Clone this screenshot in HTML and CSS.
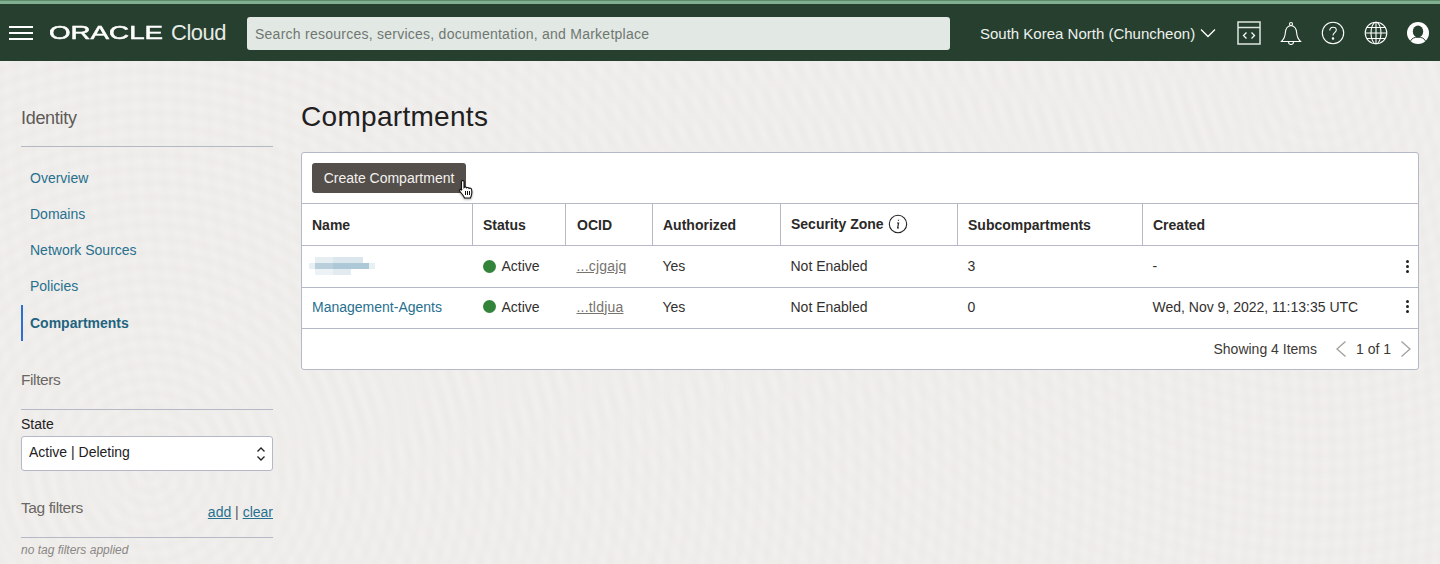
FILE: index.html
```html
<!DOCTYPE html>
<html lang="en">
<head>
	<meta charset="UTF-8">
	<meta name="viewport" content="width=device-width, initial-scale=1.0">
	<link rel="stylesheet" href="styles.css">
	<title>Compartments</title>
</head>
<body>
	<header class="topbar">
		<button class="burger" aria-label="Menu"><i></i><i></i><i></i></button>
		<div class="brand"><span class="brand-mark">ORACLE</span><span class="brand-cloud">Cloud</span></div>
		<div class="search">Search resources, services, documentation, and Marketplace</div>
		<div class="region">South Korea North (Chuncheon)
			<svg width="16" height="10" viewBox="0 0 16 10"><path d="M1 1.500l7 7 7-7" fill="none" stroke="#fff" stroke-width="1.300"/></svg>
		</div>
		<div class="tools">
			<svg width="24" height="24" viewBox="0 0 24 24" fill="none" stroke="#dfe6e0" stroke-width="1.500"><rect x="1" y="1" width="22" height="22"/><path d="M1 6.500h22"/><path d="M9.500 11.500L6.500 14.500l3 3M14.500 11.500l3 3-3 3" stroke="#fff" stroke-width="1.300"/></svg>
			<svg width="22" height="24" viewBox="0 0 22 24" fill="none" stroke="#fff" stroke-width="1.100"><path d="M1.500 20.500c2.500-2.500 3.600-4.500 3.800-8.500.2-4 2-7 5.700-7.500 3.700.5 5.500 3.500 5.700 7.500.2 4 1.300 6 3.800 8.500z"/><circle cx="11" cy="3" r="1.500"/><path d="M8.500 21a2.500 2.500 0 0 0 5 0"/></svg>
			<svg width="24" height="24" viewBox="0 0 24 24" fill="none" stroke="#fff" stroke-width="1.100"><circle cx="12" cy="12" r="10.700"/><path d="M8.800 9.500c0-2 1.400-3.300 3.300-3.300s3.200 1.200 3.200 2.800c0 2.600-3.300 2.700-3.300 5.500"/><circle cx="12" cy="17.500" r=".7" fill="#fff"/></svg>
			<svg width="24" height="24" viewBox="0 0 24 24" fill="none" stroke="#fff" stroke-width="1.100"><circle cx="12" cy="12" r="10.800"/><ellipse cx="12" cy="12" rx="5" ry="10.800"/><path d="M12 1.200v21.600M1.200 12h21.600M2.800 6.500h18.400M2.800 17.500h18.400"/></svg>
			<svg class="avatar" width="22" height="22" viewBox="0 0 22 22"><circle cx="11" cy="11" r="11" fill="#fff"/><ellipse cx="11" cy="9.500" rx="5.200" ry="6" fill="#263f2e"/><path d="M3.500 19c1.500-3 4-3.800 7.500-3.800s6 .8 7.500 3.800" fill="none" stroke="#263f2e" stroke-width="1"/></svg>
		</div>
	</header>
	<div class="page">
		<aside class="sidebar">
			<h2 class="side-title">Identity</h2>
			<nav class="side-nav">
				<a href="#">Overview</a>
				<a href="#">Domains</a>
				<a href="#">Network Sources</a>
				<a href="#">Policies</a>
				<a href="#" class="current">Compartments</a>
			</nav>
			<h3 class="filter-title">Filters</h3>
			<label class="state-label">State</label>
			<div class="select">Active | Deleting
				<svg width="10" height="16" viewBox="0 0 10 16" fill="none" stroke="#222" stroke-width="1.300"><path d="M1.500 5.500L5 2l3.500 3.500M1.500 10.500L5 14l3.500-3.500"/></svg>
			</div>
			<div class="tag-head">
				<h3>Tag filters</h3>
				<span class="tag-links"><a href="#">add</a> | <a href="#">clear</a></span>
			</div>
			<p class="no-tags">no tag filters applied</p>
		</aside>
		<main class="content">
			<h1>Compartments</h1>
			<section class="panel">
				<div class="toolbar">
					<button class="btn">Create Compartment</button>
					<svg class="pointer" width="15" height="19" viewBox="0 0 15 19"><path d="M2.500 1.500c0-1.300 2.500-1.300 2.500 0v6c.8-.8 2.200-.7 2.500.3.800-.6 2.200-.4 2.500.6.900-.5 2.300-.1 2.500 1 .5 2 .5 4.500-.4 6.800l-.6 1.800H5.500L4.500 16 1 11.500C0 10 1.500 8.700 2.800 9.800l-.3.200z" fill="#fff" stroke="#111" stroke-width="1.100"/><path d="M6.500 11v4M8.500 11v4M10.500 11v4" stroke="#111" stroke-width="1"/></svg>
				</div>
				<table class="grid">
					<colgroup><col class="c-name"><col class="c-status"><col class="c-ocid"><col class="c-auth"><col class="c-zone"><col class="c-sub"><col></colgroup>
					<thead>
						<tr>
							<th>Name</th><th>Status</th><th class="cell-ocid">OCID</th><th>Authorized</th>
							<th><span class="zone">Security Zone
								<svg width="20" height="20" viewBox="0 0 20 20"><circle cx="10" cy="10" r="8.700" fill="none" stroke="#222" stroke-width="1.100"/><path d="M10.500 5.800v.9M9 9h1.600l-1 5h1.400" fill="none" stroke="#222" stroke-width="1.200"/></svg>
							</span></th>
							<th>Subcompartments</th><th>Created</th>
						</tr>
					</thead>
					<tbody>
						<tr>
							<td><svg class="smudge" width="66" height="18" viewBox="0 0 66 18"><rect x="6" width="18" height="6" fill="#e6eef2"/><rect x="24" width="30" height="6" fill="#dbe7ed"/><rect y="6" width="6" height="6" fill="#e8f0f3"/><rect x="6" y="6" width="18" height="6" fill="#b9d0dc"/><rect x="24" y="6" width="36" height="6" fill="#adc8d6"/><rect x="60" y="6" width="6" height="6" fill="#e8f0f3"/><rect x="6" y="12" width="18" height="6" fill="#ecf2f5"/><rect x="24" y="12" width="18" height="6" fill="#e1ebf0"/></svg></td>
							<td><span class="status"><i></i>Active</span></td>
							<td class="cell-ocid"><a href="#" class="ocid">...cjgajq</a></td>
							<td>Yes</td><td>Not Enabled</td><td>3</td>
							<td><div class="created"><span>-</span><span class="kebab"><i></i><i></i><i></i></span></div></td>
						</tr>
						<tr>
							<td><a href="#" class="link">Management-Agents</a></td>
							<td><span class="status"><i></i>Active</span></td>
							<td class="cell-ocid"><a href="#" class="ocid">...tldjua</a></td>
							<td>Yes</td><td>Not Enabled</td><td>0</td>
							<td><div class="created"><span>Wed, Nov 9, 2022, 11:13:35 UTC</span><span class="kebab"><i></i><i></i><i></i></span></div></td>
						</tr>
					</tbody>
				</table>
				<div class="pager">
					<span>Showing 4 Items</span>
					<svg class="prev" width="12" height="18" viewBox="0 0 12 18"><path d="M10.500 1.500L2 9l8.500 7.500" fill="none" stroke="#a3a09c" stroke-width="1.300"/></svg>
					<span>1 of 1</span>
					<svg class="next" width="12" height="18" viewBox="0 0 12 18"><path d="M1.500 1.500L10 9l-8.500 7.500" fill="none" stroke="#a3a09c" stroke-width="1.300"/></svg>
				</div>
			</section>
		</main>
	</div>
</body>
</html>
```
FILE: styles.css
```css
*{
	box-sizing:border-box;
}
html,body{
	height:100%;
}
body{
	margin:0;
	overflow:hidden;
	color:#22201e;
	font-family:"Liberation Sans", Arial, sans-serif;
	font-size:14px;
	background-color:#f2f0ee;
	background-image:
		repeating-radial-gradient(circle at 150px 470px, rgba(226,223,219,0) 0, rgba(226,223,219,.2) 7px, rgba(226,223,219,0) 14px),
		repeating-radial-gradient(circle at 1320px 80px, rgba(226,223,219,0) 0, rgba(226,223,219,.15) 8px, rgba(226,223,219,0) 16px);
}
a{
	color:#22667f;
}
h1,h2,h3,p{
	margin:0;
	font-weight:normal;
}

/* top bar */
.topbar{
	display:flex;
	align-items:center;
	height:61px;
	padding-top:5px;
	background:#263f2e;
	background-image:linear-gradient(#5d8a6b 0 1px, #80b08f 1px 4px, #263f2e 4px);
	color:#fff;
}
.burger{
	display:flex;
	flex-direction:column;
	gap:4px;
	width:24px;
	margin-left:9px;
	padding:0;
	border:0;
	background:none;
}
.burger i{
	display:block;
	height:2px;
	background:#fff;
}
.brand{
	display:flex;
	align-items:center;
	width:198px;
	margin-left:16px;
}
.brand-mark{
	display:inline-block;
	width:116px;
	font-size:19px;
	line-height:20px;
	transform:scaleX(1.460);
	transform-origin:left center;
	-webkit-text-stroke:.5px #fff;
}
.brand-cloud{
	margin-left:6px;
	font-size:22px;
	letter-spacing:-.5px;
	color:#e6ebe7;
}
.search{
	width:703px;
	height:33px;
	padding:1px 8px 0;
	border-radius:3px;
	background:#e2e8e3;
	color:#6f7772;
	line-height:33px;
	letter-spacing:.25px;
}
.region{
	display:flex;
	align-items:center;
	gap:5px;
	margin-left:30px;
	font-size:15px;
	color:#eef1ee;
	white-space:nowrap;
}
.tools{
	display:flex;
	align-items:center;
	gap:19px;
	margin-left:21px;
}

/* page */
.page{
	display:flex;
	padding-left:21px;
	padding-right:21px;
}
.sidebar{
	flex:none;
	width:252px;
	padding-top:47px;
}
.side-title{
	height:39px;
	border-bottom:1px solid #b4b8c0;
	font-size:18px;
	line-height:21px;
	color:#5d5a57;
	letter-spacing:-.3px;
}
.side-nav{
	display:flex;
	flex-direction:column;
	margin-top:13px;
}
.side-nav a{
	height:36px;
	padding-left:9px;
	line-height:36px;
	text-decoration:none;
	color:#27708f;
}
.side-nav .current{
	margin-top:1px;
	border-left:2px solid #2d6fce;
	padding-left:7px;
	font-weight:bold;
	color:#1f6480;
}
.filter-title{
	height:39px;
	margin-top:30px;
	margin-bottom:6px;
	border-bottom:1px solid #b4b8c7;
	font-size:15.500px;
	line-height:18px;
	letter-spacing:-.4px;
	color:#6a6764;
}
.state-label{
	display:block;
	margin-bottom:4px;
	line-height:16px;
}
.select{
	display:flex;
	align-items:center;
	justify-content:space-between;
	height:35px;
	padding:0 6px 3px 7px;
	border:1px solid #b4b8c7;
	border-radius:3px;
	background:#fff;
}
.select svg{
	margin-top:3px;
}
.tag-head{
	display:flex;
	align-items:flex-end;
	justify-content:space-between;
	height:47px;
	padding-bottom:17px;
	margin-top:20px;
	border-bottom:1px solid #b4b8c7;
}
.tag-head h3{
	margin-bottom:0;
	font-size:15.500px;
	line-height:22px;
	letter-spacing:-.4px;
	color:#6a6764;
	transform:translateY(-1px);
}
.tag-links{
	color:#555;
}
.tag-links a{
	color:#27708f;
}
.no-tags{
	margin-top:5px;
	font-size:12px;
	font-style:italic;
	color:#8a8784;
}

/* main */
.content{
	flex:1;
	min-width:0;
	margin-left:28px;
}
.content h1{
	height:91px;
	padding-top:39px;
	font-size:28px;
	line-height:34px;
	letter-spacing:.3px;
}
.panel{
	border:1px solid #b4b8c7;
	border-radius:3px;
	background:#fff;
}
.toolbar{
	position:relative;
	height:50px;
	padding:10px;
}
.btn{
	height:30px;
	width:154px;
	padding:0;
	border:0;
	border-radius:3px;
	background:#544f4a;
	color:#f4f2f0;
	font:14px "Liberation Sans", Arial, sans-serif;
}
.pointer{
	position:absolute;
	left:157px;
	top:27px;
	filter:drop-shadow(0 1px 1px rgba(0,0,0,.35));
}
.grid{
	width:100%;
	border-collapse:collapse;
	table-layout:fixed;
}
.c-name{width:170px}
.c-status{width:93px}
.c-ocid{width:87px}
.c-auth{width:128px}
.c-zone{width:177px}
.c-sub{width:185px}
.grid th{
	height:42px;
	padding:0 10px 0 10.500px;
	border-top:1px solid #b4b8c7;
	border-bottom:1px solid #b4b8c7;
	border-left:1px solid #b4b8c7;
	font-weight:bold;
	text-align:left;
	color:#2b2927;
}
.grid th:first-child{
	border-left:0;
	padding-left:10px;
}
.grid td{
	height:41.500px;
	padding:0 10px 0 10.500px;
	border-bottom:1px solid #b4b8c7;
	color:#33302e;
	white-space:nowrap;
}
.grid td:first-child{
	padding-left:10px;
}
.grid td:last-child{
	padding-right:9px;
}
.grid tbody tr:last-child td{
	padding-bottom:2px;
}
.grid .cell-ocid{
	padding-left:11.500px;
}
.zone{
	display:flex;
	align-items:center;
	gap:4px;
	padding-bottom:2px;
}
.smudge{
	display:block;
	margin-left:-3px;
}
.status{
	display:flex;
	align-items:center;
	gap:6px;
}
.status i{
	width:13px;
	height:13px;
	border-radius:50%;
	background:#33843a;
}
.ocid{
	color:#77736f;
	letter-spacing:.2px;
}
.link{
	color:#27708f;
	text-decoration:none;
}
.created{
	display:flex;
	align-items:center;
	justify-content:space-between;
}
.kebab{
	display:flex;
	flex-direction:column;
	gap:2px;
	width:3px;
}
.kebab i{
	width:3px;
	height:3px;
	border-radius:50%;
	background:#22201e;
}
.pager{
	display:flex;
	align-items:center;
	justify-content:flex-end;
	height:40px;
	padding-right:6px;
	color:#3c3936;
}
.prev{
	margin-left:18px;
	margin-right:9px;
}
.next{
	margin-left:9px;
}
```
